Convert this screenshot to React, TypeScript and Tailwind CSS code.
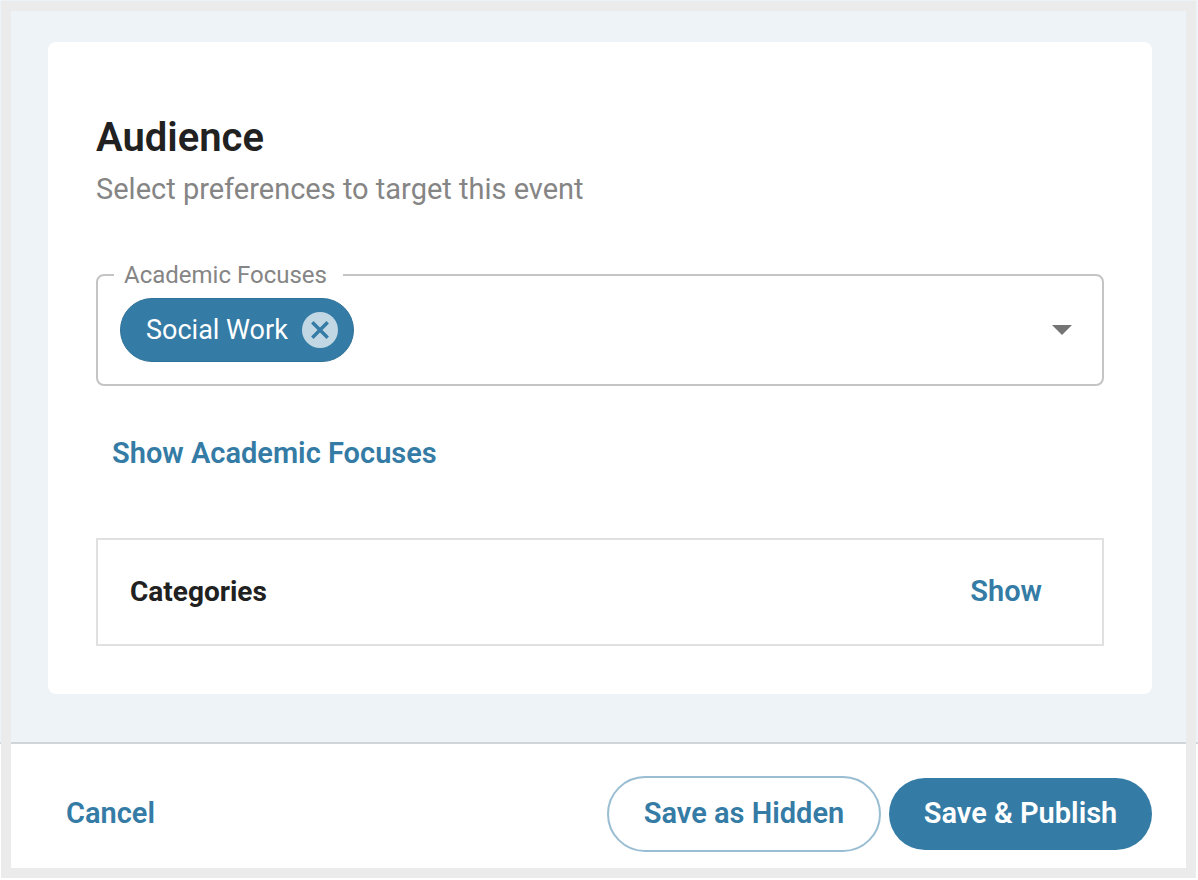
import { useState } from 'react';

export default function App() {
  const [focuses, setFocuses] = useState<string[]>(['Social Work']);
  const [query, setQuery] = useState('');

  function removeFocus(name: string) {
    setFocuses(focuses.filter((f) => f !== name));
  }

  return (
    <div className="relative flex min-h-screen flex-col bg-[#edf3f7] font-['Roboto',sans-serif] text-[#212121]">
      <main className="flex-1 pt-[42px] pr-[46px] pb-12 pl-12">
        <section className="rounded-lg bg-white px-12 pt-18 pb-12">
          <h1 className="text-[40px] leading-12 font-semibold">Audience</h1>
          <p className="mt-2 text-[29px] leading-[38px] text-[#858585]">Select preferences to target this event</p>

          <fieldset className="mt-[51px] rounded-lg border-2 border-[#c4c4c4] px-4 pb-[22px]">
            <legend className="pr-4 pl-[10px] text-[24px] leading-8 text-[#858585]">
              <label htmlFor="focus-input">Academic Focuses</label>
            </legend>
            <div className="flex items-center px-[6px] pt-[7px]">
              {focuses.map((name) => (
                <span
                  key={name}
                  className="flex h-16 items-center gap-[14px] rounded-full border border-[#2f7299] bg-[#347ba5] pr-[15px] pl-[25px] text-[27px] text-white"
                >
                  {name}
                  <button aria-label={`Remove ${name}`} onClick={() => removeFocus(name)}>
                    <RemoveIcon />
                  </button>
                </span>
              ))}
              <input
                id="focus-input"
                value={query}
                onChange={(e) => setQuery(e.target.value)}
                className="h-16 min-w-0 flex-1 bg-transparent px-4 text-[27px] outline-none"
              />
              <button aria-label="Open academic focuses" className="px-2 py-4">
                <svg className="block" width="20" height="10" viewBox="0 0 20 10" fill="#757575">
                  <path d="M0 0h20L10 10z" />
                </svg>
              </button>
            </div>
          </fieldset>

          {/* Text buttons */}
          <button className="mt-8 flex h-18 items-center px-4 text-[29px] font-semibold text-[#347ba5]">
            Show Academic Focuses
          </button>

          <div className="mt-12 flex h-[108px] items-center justify-between border-2 border-[#e0e0e0] pr-11 pl-8">
            <h2 className="text-[28px] font-bold">Categories</h2>
            <button className="h-18 px-4 text-[29px] font-semibold text-[#347ba5]">Show</button>
          </div>
        </section>
      </main>

      <footer className="flex items-center justify-between border-t-2 border-[#d0d5d9] bg-white pt-8 pr-[46px] pb-7 pl-12">
        <button className="h-18 px-[18px] text-[29px] font-semibold text-[#347ba5]">Cancel</button>
        <div className="flex items-center gap-2">
          <button className="h-19 min-w-[274px] rounded-full border-2 border-[#99bdd2] px-8 text-[29px] font-semibold text-[#347ba5]">
            Save as Hidden
          </button>
          <button className="h-18 min-w-[263px] rounded-full bg-[#347ba5] px-8 text-[29px] font-semibold text-white">
            Save &amp; Publish
          </button>
        </div>
      </footer>

      {/* Frame laid over the whole page */}
      <div className="pointer-events-none absolute top-px right-0.5 bottom-0.5 left-px border-10 border-[#ebebeb]" />
    </div>
  );
}

function RemoveIcon() {
  return (
    <svg className="block" width="36" height="36" viewBox="0 0 36 36" fill="none">
      <circle cx="18" cy="18" r="18" fill="#c2d7e4" />
      <path d="M10.3 10.3l15.4 15.4M25.7 10.3L10.3 25.7" stroke="#347ba5" strokeWidth="3.4" />
    </svg>
  );
}
